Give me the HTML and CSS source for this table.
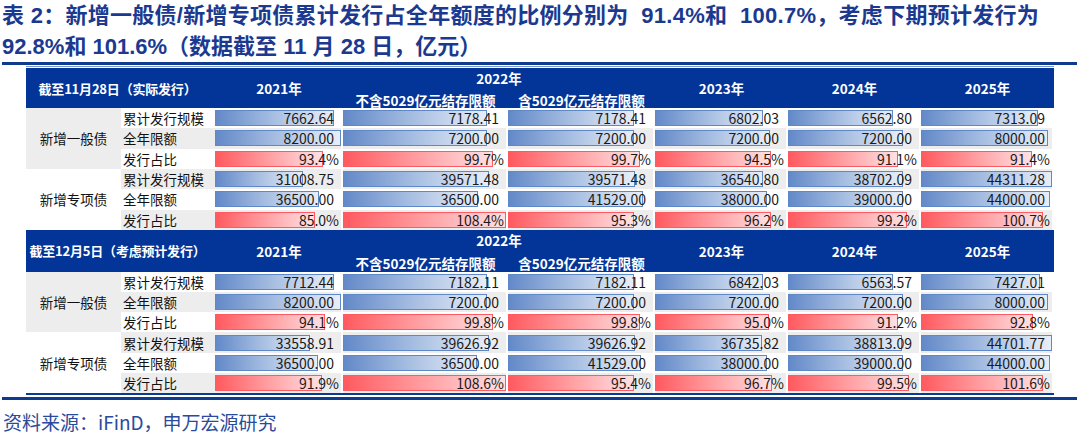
FILE: index.html
```html
<!DOCTYPE html>
<html lang="zh-CN">
<head>
<meta charset="utf-8">
<title>表 2</title>
<link rel="stylesheet" href="styles.css">
</head>
<body>
<div class="title"><div class="tl1">表 2：新增一般债/新增专项债累计发行占全年额度的比例分别为  91.4%和  100.7%，考虑下期预计发行为</div><div>92.8%和 101.6%（数据截至 11 月 28 日，亿元）</div></div>
<div class="rule"></div>
<div class="tables">
  <div class="grid g1">
    <div class="hd corner">截至11月28日（实际发行）</div>
    <div class="hd yr">2021年</div>
    <div class="hd y22">2022年</div>
    <div class="hd yr">2023年</div>
    <div class="hd yr">2024年</div>
    <div class="hd yr">2025年</div>
    <div class="hd sub">不含5029亿元结存限额</div>
    <div class="hd sub">含5029亿元结存限额</div>

    <div class="grp g">新增一般债</div>
    <div class="lbl">累计发行规模</div>
    <div class="d"><i class="bar" style="width:119px"></i><span class="n">7662.64</span></div>
    <div class="d"><i class="bar" style="width:144px"></i><span class="n">7178.41</span></div>
    <div class="d"><i class="bar" style="width:126px"></i><span class="n">7178.41</span></div>
    <div class="d"><i class="bar" style="width:108px"></i><span class="n">6802.03</span></div>
    <div class="d"><i class="bar" style="width:105px"></i><span class="n">6562.80</span></div>
    <div class="d"><i class="bar" style="width:117px"></i><span class="n">7313.09</span></div>

    <div class="lbl g">全年限额</div>
    <div class="d g"><i class="bar" style="width:126px"></i><span class="n">8200.00</span></div>
    <div class="d g"><i class="bar" style="width:144px"></i><span class="n">7200.00</span></div>
    <div class="d g"><i class="bar" style="width:126px"></i><span class="n">7200.00</span></div>
    <div class="d g"><i class="bar" style="width:115px"></i><span class="n">7200.00</span></div>
    <div class="d g"><i class="bar" style="width:115px"></i><span class="n">7200.00</span></div>
    <div class="d g"><i class="bar" style="width:127px"></i><span class="n">8000.00</span></div>

    <div class="lbl">发行占比</div>
    <div class="d"><i class="bar red" style="width:108px"></i><span class="n p">93.4%</span></div>
    <div class="d"><i class="bar red" style="width:150px"></i><span class="n p">99.7%</span></div>
    <div class="d"><i class="bar red" style="width:132px"></i><span class="n p">99.7%</span></div>
    <div class="d"><i class="bar red" style="width:116px"></i><span class="n p">94.5%</span></div>
    <div class="d"><i class="bar red" style="width:110px"></i><span class="n p">91.1%</span></div>
    <div class="d"><i class="bar red" style="width:111px"></i><span class="n p">91.4%</span></div>

    <div class="grp">新增专项债</div>
    <div class="lbl g">累计发行规模</div>
    <div class="d g"><i class="bar" style="width:88px"></i><span class="n">31008.75</span></div>
    <div class="d g"><i class="bar" style="width:146px"></i><span class="n">39571.48</span></div>
    <div class="d g"><i class="bar" style="width:127px"></i><span class="n">39571.48</span></div>
    <div class="d g"><i class="bar" style="width:108px"></i><span class="n">36540.80</span></div>
    <div class="d g"><i class="bar" style="width:115px"></i><span class="n">38702.09</span></div>
    <div class="d g"><i class="bar" style="width:131px"></i><span class="n">44311.28</span></div>

    <div class="lbl">全年限额</div>
    <div class="d"><i class="bar" style="width:104px"></i><span class="n">36500.00</span></div>
    <div class="d"><i class="bar" style="width:135px"></i><span class="n">36500.00</span></div>
    <div class="d"><i class="bar" style="width:135px"></i><span class="n">41529.00</span></div>
    <div class="d"><i class="bar" style="width:112px"></i><span class="n">38000.00</span></div>
    <div class="d"><i class="bar" style="width:115px"></i><span class="n">39000.00</span></div>
    <div class="d"><i class="bar" style="width:129px"></i><span class="n">44000.00</span></div>

    <div class="lbl g">发行占比</div>
    <div class="d g"><i class="bar red" style="width:100px"></i><span class="n p">85.0%</span></div>
    <div class="d g"><i class="bar red" style="width:163px"></i><span class="n p">108.4%</span></div>
    <div class="d g"><i class="bar red" style="width:126px"></i><span class="n p">95.3%</span></div>
    <div class="d g"><i class="bar red" style="width:116px"></i><span class="n p">96.2%</span></div>
    <div class="d g"><i class="bar red" style="width:119px"></i><span class="n p">99.2%</span></div>
    <div class="d g"><i class="bar red" style="width:122px"></i><span class="n p">100.7%</span></div>
  </div>

  <div class="grid g2">
    <div class="hd corner">截至12月5日（考虑预计发行）</div>
    <div class="hd yr">2021年</div>
    <div class="hd y22">2022年</div>
    <div class="hd yr">2023年</div>
    <div class="hd yr">2024年</div>
    <div class="hd yr">2025年</div>
    <div class="hd sub">不含5029亿元结存限额</div>
    <div class="hd sub">含5029亿元结存限额</div>

    <div class="grp g">新增一般债</div>
    <div class="lbl">累计发行规模</div>
    <div class="d"><i class="bar" style="width:119px"></i><span class="n">7712.44</span></div>
    <div class="d"><i class="bar" style="width:144px"></i><span class="n">7182.11</span></div>
    <div class="d"><i class="bar" style="width:126px"></i><span class="n">7182.11</span></div>
    <div class="d"><i class="bar" style="width:108px"></i><span class="n">6842.03</span></div>
    <div class="d"><i class="bar" style="width:105px"></i><span class="n">6563.57</span></div>
    <div class="d"><i class="bar" style="width:119px"></i><span class="n">7427.01</span></div>

    <div class="lbl g">全年限额</div>
    <div class="d g"><i class="bar" style="width:126px"></i><span class="n">8200.00</span></div>
    <div class="d g"><i class="bar" style="width:144px"></i><span class="n">7200.00</span></div>
    <div class="d g"><i class="bar" style="width:126px"></i><span class="n">7200.00</span></div>
    <div class="d g"><i class="bar" style="width:115px"></i><span class="n">7200.00</span></div>
    <div class="d g"><i class="bar" style="width:115px"></i><span class="n">7200.00</span></div>
    <div class="d g"><i class="bar" style="width:127px"></i><span class="n">8000.00</span></div>

    <div class="lbl">发行占比</div>
    <div class="d"><i class="bar red" style="width:110px"></i><span class="n p">94.1%</span></div>
    <div class="d"><i class="bar red" style="width:150px"></i><span class="n p">99.8%</span></div>
    <div class="d"><i class="bar red" style="width:132px"></i><span class="n p">99.8%</span></div>
    <div class="d"><i class="bar red" style="width:114px"></i><span class="n p">95.0%</span></div>
    <div class="d"><i class="bar red" style="width:110px"></i><span class="n p">91.2%</span></div>
    <div class="d"><i class="bar red" style="width:112px"></i><span class="n p">92.8%</span></div>

    <div class="grp">新增专项债</div>
    <div class="lbl g">累计发行规模</div>
    <div class="d g"><i class="bar" style="width:95px"></i><span class="n">33558.91</span></div>
    <div class="d g"><i class="bar" style="width:146px"></i><span class="n">39626.92</span></div>
    <div class="d g"><i class="bar" style="width:127px"></i><span class="n">39626.92</span></div>
    <div class="d g"><i class="bar" style="width:107px"></i><span class="n">36735.82</span></div>
    <div class="d g"><i class="bar" style="width:114px"></i><span class="n">38813.09</span></div>
    <div class="d g"><i class="bar" style="width:131px"></i><span class="n">44701.77</span></div>

    <div class="lbl">全年限额</div>
    <div class="d"><i class="bar" style="width:103px"></i><span class="n">36500.00</span></div>
    <div class="d"><i class="bar" style="width:134px"></i><span class="n">36500.00</span></div>
    <div class="d"><i class="bar" style="width:133px"></i><span class="n">41529.00</span></div>
    <div class="d"><i class="bar" style="width:112px"></i><span class="n">38000.00</span></div>
    <div class="d"><i class="bar" style="width:115px"></i><span class="n">39000.00</span></div>
    <div class="d"><i class="bar" style="width:129px"></i><span class="n">44000.00</span></div>

    <div class="lbl g">发行占比</div>
    <div class="d g"><i class="bar red" style="width:107px"></i><span class="n p">91.9%</span></div>
    <div class="d g"><i class="bar red" style="width:163px"></i><span class="n p">108.6%</span></div>
    <div class="d g"><i class="bar red" style="width:126px"></i><span class="n p">95.4%</span></div>
    <div class="d g"><i class="bar red" style="width:117px"></i><span class="n p">96.7%</span></div>
    <div class="d g"><i class="bar red" style="width:121px"></i><span class="n p">99.5%</span></div>
    <div class="d g"><i class="bar red" style="width:122px"></i><span class="n p">101.6%</span></div>
  </div>
</div>
<div class="rule rule2"></div>
<div class="src">资料来源：iFinD，申万宏源研究</div>
</body>
</html>
```

FILE: styles.css
```css
* { box-sizing: border-box; }
body {
  margin: 0;
  background: #fff;
  font-family: "Liberation Sans", "Noto Sans CJK SC", sans-serif;
}
.title {
  color: #1b3a8f;
  font-weight: bold;
  font-size: 22px;
  line-height: 31px;
  white-space: pre;
  padding-left: 2px;
}
.tl1 { letter-spacing: 0.27px; }
.rule {
  height: 3px;
  background: #103a8e;
  margin: 0 3px 0 2px;
}
.tables {
  width: 1028px;
  margin: 1px 0 0 26px;
  border-top: 1px solid #7d97cf;
  padding-top: 1px;
}
.grid {
  display: grid;
  grid-template-columns: 95px 94px 128px 165px 147px 133px 133px 133px;
  font-family: "Noto Sans CJK SC", sans-serif;
}
.g1 { grid-template-rows: 20px 20px repeat(6, 20.33px); }
.g2 {
  grid-template-rows: 21px 21px repeat(6, 20.17px);
  border-bottom: 2px solid #0b3a94;
}
.hd {
  background: #023597;
  color: #fff;
  font-weight: bold;
  font-size: 13.5px;
  display: flex;
  align-items: center;
  justify-content: center;
  white-space: nowrap;
}
.corner {
  grid-column: 1 / span 2;
  grid-row: span 2;
  font-size: 13px;
  letter-spacing: -0.2px;
  padding-right: 6px;
}
.yr { grid-row: span 2; }
.y22 { grid-column: span 2; }
.sub { padding-top: 3px; }
.grp {
  grid-column: 1;
  grid-row: span 3;
  display: flex;
  align-items: center;
  justify-content: center;
  font-size: 13.5px;
  color: #111;
  background: #fff;
}
.lbl {
  grid-column: 2;
  display: flex;
  align-items: center;
  padding-left: 2px;
  font-size: 13.5px;
  color: #111;
  background: #fff;
  white-space: nowrap;
}
.g { background: #ededed; }
.d {
  display: grid;
  align-items: center;
  background: #fff;
  border-right: 2px solid #fff;
}
.d.g { background: #ededed; }
.d > * { grid-area: 1 / 1; }
.bar {
  justify-self: start;
  height: 16px;
  border: 1px solid #5f88c9;
  background: linear-gradient(90deg, #6389c8 0%, #a8bfe2 50%, #e8eef8 100%);
}
.bar.red {
  border-color: #ff5a61;
  background: linear-gradient(90deg, #ff5a5f 0%, #ff9fa2 50%, #ffe1e3 100%);
}
.n {
  justify-self: end;
  padding-right: 7px;
  font-size: 14px;
  color: #1a1a1a;
  line-height: 16px;
  white-space: nowrap;
}
.n.p { padding-right: 2px; }
.rule2 { margin-top: 2px; }
.src {
  margin-top: 10px;
  padding-left: 3px;
  font-family: "Noto Sans CJK SC", sans-serif;
  font-size: 19px;
  line-height: 24px;
  color: #2a4b9b;
}
```
